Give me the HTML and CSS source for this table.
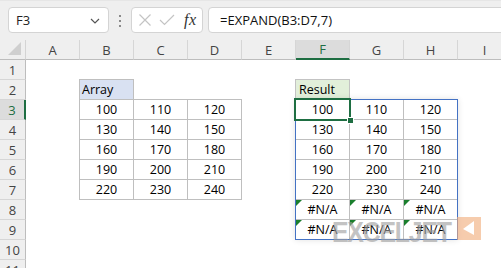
FILE: index.html
```html
<!DOCTYPE html>
<html>
<head>
<meta charset="utf-8">
<link rel="stylesheet" href="styles.css">
</head>
<body>
<div class="app">
  <div class="toolbar">
    <div class="namebox">
      <span class="ref">F3</span>
      <svg class="chev" width="10" height="6" viewBox="0 0 10 6"><path d="M1 1 L5 5 L9 1" fill="none" stroke="#555" stroke-width="1.2"/></svg>
    </div>
    <div class="dots"><i></i><i></i><i></i></div>
    <div class="fxbox">
      <svg width="14" height="12" viewBox="0 0 14 12" class="ic"><path d="M1.5 0.5 L12.5 11.5 M12.5 0.5 L1.5 11.5" stroke="#c4c4c4" stroke-width="1.2" fill="none"/></svg>
      <svg width="16" height="12" viewBox="0 0 16 12" class="ic"><path d="M1 6 L5.5 10.5 L15 1" stroke="#c4c4c4" stroke-width="1.2" fill="none"/></svg>
      <span class="fx">fx</span>
    </div>
    <div class="formula">=EXPAND(B3:D7,7)</div>
  </div>
  <div class="sheet">
    <div class="colheads">
      <div class="corner"><svg width="14" height="14" viewBox="0 0 14 14"><path d="M13 0 L13 13 L0 13 Z" fill="#cfcfcf"/></svg></div>
      <div class="ch">A</div><div class="ch">B</div><div class="ch">C</div><div class="ch">D</div><div class="ch">E</div><div class="ch sel">F</div><div class="ch">G</div><div class="ch">H</div><div class="ch">I</div>
    </div>
    <div class="body">
      <div class="rowheads">
        <div class="rh">1</div><div class="rh">2</div><div class="rh sel">3</div><div class="rh">4</div><div class="rh">5</div><div class="rh">6</div><div class="rh">7</div><div class="rh">8</div><div class="rh">9</div><div class="rh">10</div><div class="rh">11</div>
      </div>
      <div class="cells">
        <div class="array">
          <div class="c hdr-blue first top">Array</div><div class="c blank"></div><div class="c blank"></div>
          <div class="c n first">100</div><div class="c n">110</div><div class="c n">120</div>
          <div class="c n first">130</div><div class="c n">140</div><div class="c n">150</div>
          <div class="c n first">160</div><div class="c n">170</div><div class="c n">180</div>
          <div class="c n first">190</div><div class="c n">200</div><div class="c n">210</div>
          <div class="c n first">220</div><div class="c n">230</div><div class="c n">240</div>
        </div>
        <div class="reshdr">Result</div>
        <div class="spill">
          <div class="s">100</div><div class="s">110</div><div class="s last">120</div>
          <div class="s">130</div><div class="s">140</div><div class="s last">150</div>
          <div class="s">160</div><div class="s">170</div><div class="s last">180</div>
          <div class="s">190</div><div class="s">200</div><div class="s last">210</div>
          <div class="s">220</div><div class="s">230</div><div class="s last">240</div>
          <div class="s err">#N/A</div><div class="s err">#N/A</div><div class="s err last">#N/A</div>
          <div class="s err bot">#N/A</div><div class="s err bot">#N/A</div><div class="s err last bot">#N/A</div>
          <div class="selection"></div>
          <div class="handle"></div>
        </div>
      </div>
    </div>
  </div>
  <div class="watermark"><span class="wm-text">EXCELJET</span><span class="wm-logo"><svg width="24" height="22" viewBox="0 0 24 22"><path d="M17 4 L17 18 L6 12 Z" fill="#ffffff"/></svg></span></div>
</div>
</body>
</html>
```

FILE: styles.css
```css
* { box-sizing: border-box; }
html, body { margin: 0; padding: 0; }
body {
  width: 501px;
  height: 268px;
  overflow: hidden;
  background: #ffffff;
  font-family: "Open Sans", "Noto Sans", sans-serif;
  color: #000;
}
.app { position: relative; width: 501px; height: 268px; overflow: hidden; }

.toolbar {
  height: 40px;
  background: #efefef;
  display: flex;
  align-items: flex-start;
  padding-top: 7px;
  padding-left: 8px;
  border-top: 1px solid #e6e6e6;
}
.namebox, .fxbox, .formula {
  height: 26px;
  background: #fff;
  border: 1px solid #d4d4d4;
  border-radius: 4px;
  margin-top: -1px;
}
.namebox {
  width: 101px;
  flex: none;
  display: flex;
  align-items: center;
  justify-content: space-between;
  padding: 0 8px 0 7px;
  font-size: 13px;
  color: #222;
}
.chev { margin-top: 1px; }
.dots {
  width: 22px;
  flex: none;
  display: flex;
  flex-direction: column;
  align-items: center;
  gap: 3px;
  padding-top: 7px;
}
.dots i { display: block; width: 2px; height: 2px; background: #8a8a8a; }
.fxbox {
  width: 72px;
  flex: none;
  display: flex;
  align-items: center;
  padding-left: 6px;
  gap: 7px;
}
.fx {
  font-family: "Liberation Serif", "DejaVu Serif", serif;
  font-style: italic;
  font-size: 16px;
  color: #333;
  margin-left: 2px;
  letter-spacing: 0.5px;
}
.formula {
  flex: 1;
  margin-left: 5px;
  margin-right: -20px;
  font-size: 13px;
  line-height: 24px;
  padding-left: 11px;
  color: #111;
}

.sheet { display: flex; flex-direction: column; }
.colheads {
  display: flex;
  height: 20px;
  background: #efefef;
}
.corner {
  width: 26px;
  flex: none;
  height: 20px;
  border-right: 1px solid #d4d4d4;
  border-bottom: 1px solid #bdbdbd;
  display: flex;
  justify-content: flex-end;
  align-items: flex-end;
  padding: 0 3px 3px 0;
}
.ch {
  width: 54px;
  flex: none;
  height: 20px;
  border-right: 1px solid #d6d6d6;
  border-bottom: 1px solid #bdbdbd;
  text-align: center;
  font-size: 13px;
  line-height: 20px;
  color: #444;
}
.ch.sel {
  background: #dcdcdc;
  border-bottom: 2px solid #1e6e42;
  color: #1e6e42;
  line-height: 19px;
}

.body { display: flex; }
.rowheads { width: 26px; flex: none; display: flex; flex-direction: column; background: #efefef; }
.rh {
  height: 20px;
  border-right: 1px solid #bdbdbd;
  border-bottom: 1px solid #d6d6d6;
  text-align: center;
  font-size: 13px;
  line-height: 20px;
  color: #444;
}
.rh.sel {
  background: #dcdcdc;
  border-right: 2px solid #1e6e42;
  color: #1e6e42;
}

.cells {
  flex: none;
  display: grid;
  grid-template-columns: repeat(9, 54px);
  grid-template-rows: repeat(11, 20px);
}

.array {
  grid-column: 2 / 5;
  grid-row: 2 / 8;
  margin: -1px 0 0 -1px;
  display: grid;
  grid-template-columns: 55px 54px 54px;
  grid-template-rows: 21px repeat(5, 20px);
}
.c {
  border-right: 1px solid #bfbfbf;
  border-bottom: 1px solid #bfbfbf;
  font-size: 12.5px;
  line-height: 19px;
}
.c.first { border-left: 1px solid #bfbfbf; }
.c.top { border-top: 1px solid #bfbfbf; }
.c.blank { border-right: none; }
.c.n { text-align: center; }
.hdr-blue { background: #d9e1f2; padding-left: 2px; }

.reshdr {
  grid-column: 6 / 7;
  grid-row: 2 / 3;
  margin: -1px 0 0 -1px;
  border: 1px solid #c3c3c3;
  background: #e2efda;
  font-size: 12.5px;
  line-height: 19px;
  padding-left: 3px;
}

.spill {
  grid-column: 6 / 9;
  grid-row: 3 / 10;
  margin: -1px 0 0 -1px;
  border: 1px solid #4472c4;
  position: relative;
  display: grid;
  grid-template-columns: 54px 54px 53px;
  grid-template-rows: repeat(6, 20px) 19px;
  box-shadow: 0 0 6px rgba(0,0,0,0.12);
  background: #fff;
}
.s {
  position: relative;
  border-right: 1px solid #bfbfbf;
  border-bottom: 1px solid #bfbfbf;
  text-align: center;
  font-size: 12.5px;
  line-height: 19px;
}
.s.last { border-right: none; }
.s.bot { border-bottom: none; }
.s.err::before {
  content: "";
  position: absolute;
  left: 0;
  top: 0;
  width: 6px;
  height: 6px;
  background: #1a7f2e;
  clip-path: polygon(0 0, 100% 0, 0 100%);
}
.selection {
  position: absolute;
  left: -2px;
  top: -2px;
  width: 57px;
  height: 23px;
  border: 2px solid #1e6e42;
}
.handle {
  position: absolute;
  left: 51px;
  top: 17px;
  width: 7px;
  height: 7px;
  background: #1e6e42;
  border: 1px solid #fff;
}

.watermark {
  position: absolute;
  left: 332px;
  top: 217px;
  height: 23px;
  display: flex;
  align-items: flex-end;
  opacity: 0.62;
}
.wm-text {
  font-family: "Liberation Sans", Arial, sans-serif;
  font-weight: bold;
  font-size: 30px;
  line-height: 23px;
  height: 23px;
  overflow: visible;
  color: #a0a0a0;
  letter-spacing: -1.5px;
  transform: translateY(3px) scaleX(0.83);
  transform-origin: left center;
  display: inline-block;
  width: 124px;
  white-space: nowrap;
}
.wm-logo {
  width: 24px;
  height: 23px;
  background: #f2ad7c;
  display: flex;
  margin-left: 1px;
}
```
